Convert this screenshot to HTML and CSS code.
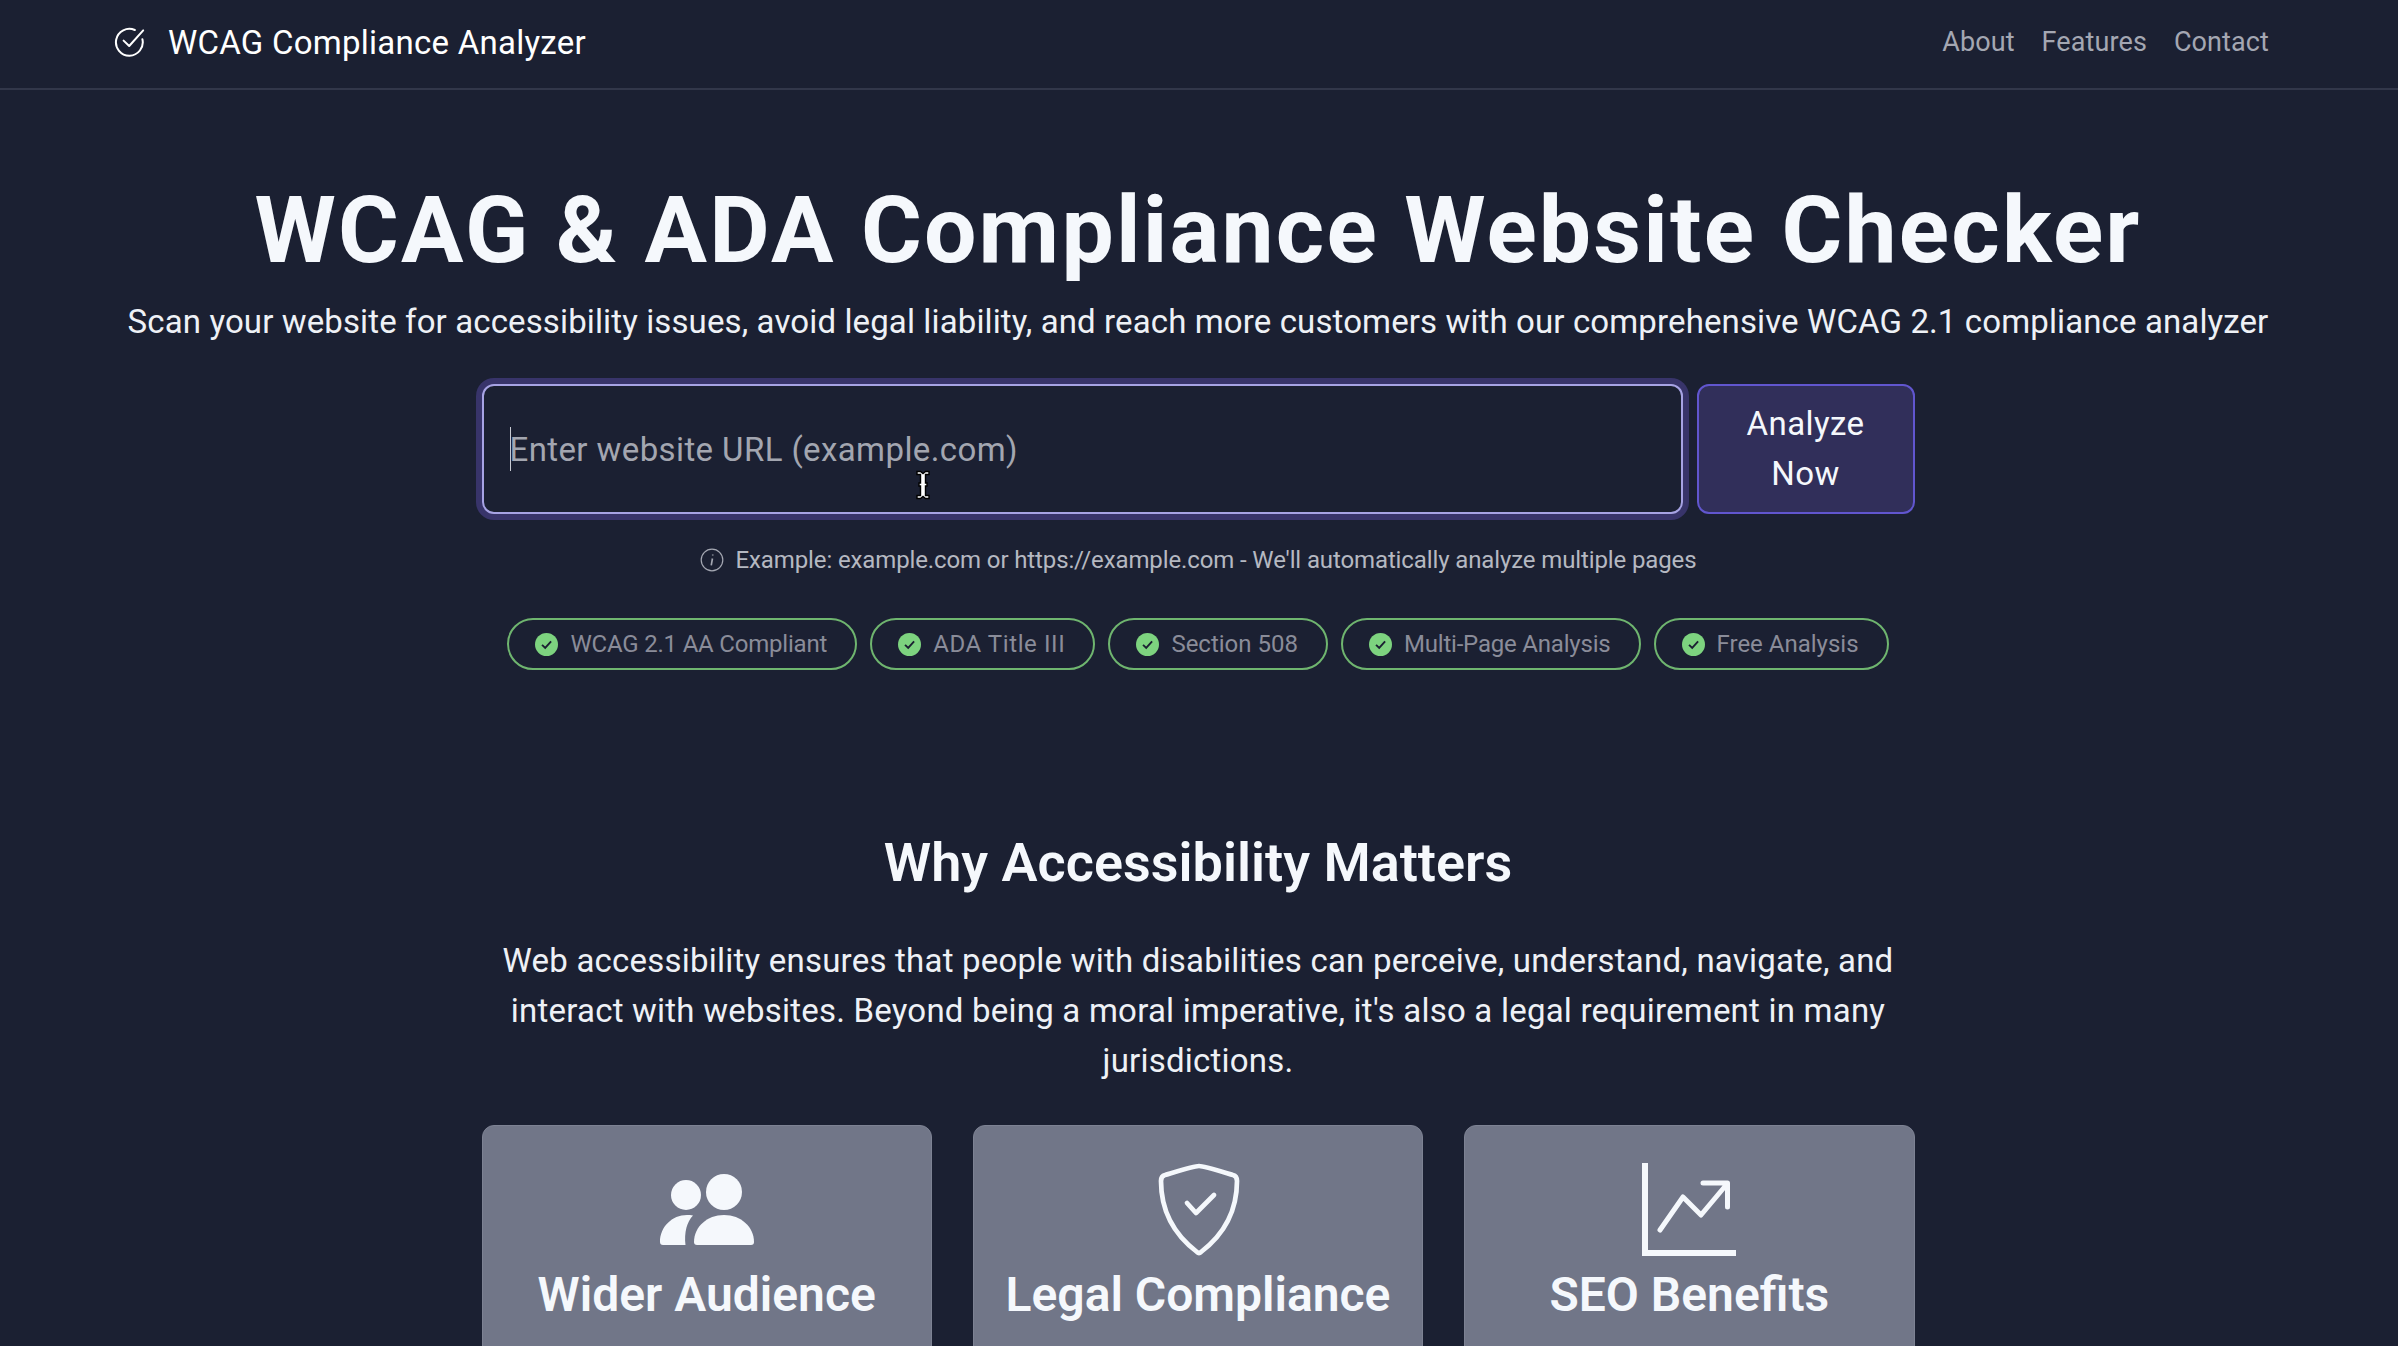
FILE: index.html
```html
<!DOCTYPE html>
<html lang="en">
<head>
<meta charset="utf-8">
<title>WCAG Compliance Analyzer</title>
<link rel="stylesheet" href="styles.css">
</head>
<body>
<header class="navbar">
  <a class="brand">
    <svg class="brand-icon" viewBox="0 0 16 16" fill="none" stroke="currentColor" stroke-width="1" stroke-linecap="round" stroke-linejoin="round"><path d="M14.2 6.6A6.7 6.7 0 1 1 10.4 2"/><path d="M4.8 7.3 7.6 10 14.6 2.2"/></svg>
    <span>WCAG Compliance Analyzer</span>
  </a>
  <nav class="nav-links"><a>About</a><a>Features</a><a>Contact</a></nav>
</header>
<main class="main">
  <h1 class="title">WCAG &amp; ADA Compliance Website Checker</h1>
  <p class="subtitle">Scan your website for accessibility issues, avoid legal liability, and reach more customers with our comprehensive WCAG 2.1 compliance analyzer</p>
  <div class="narrow">
    <form class="search">
      <div class="url-input">
        <span class="caret"></span><span class="placeholder">Enter website URL (example.com)</span>
        <svg class="ibeam" viewBox="0 0 16 30" fill="#fff" stroke="#000" stroke-width="1.4"><path d="M2 1.500h3.500L8 3.500l2.500-2H14v3h-3.500V13H12v3h-1.500v9.500H14v3h-3.500L8 26.500l-2.500 2H2v-3h3.500V16H4v-3h1.500V4.500H2z"/></svg>
      </div>
      <button class="analyze" type="button">Analyze Now</button>
    </form>
    <p class="hint">
      <svg class="hint-icon" viewBox="0 0 16 16" fill="none" stroke="currentColor"><circle cx="8" cy="8" r="7.2" stroke-width=".8"/><path d="M8.3 7 7.500 11.600M8.500 4.400v.6" stroke-width="1.100"/></svg>
      <span>Example: example.com or https://example.com - We'll automatically analyze multiple pages</span>
    </p>
    <ul class="badges">
      <li class="badge badge-tight"><svg class="badge-check" viewBox="0 0 16 16"><circle cx="8" cy="8" r="8" fill="#7dd37f"/><path d="M4.900 8.200 7.100 10.400 11.200 5.800" fill="none" stroke="#1b2032" stroke-width="1.300"/></svg><span>WCAG 2.1 AA Compliant</span></li>
      <li class="badge badge-loose"><svg class="badge-check" viewBox="0 0 16 16"><circle cx="8" cy="8" r="8" fill="#7dd37f"/><path d="M4.900 8.200 7.100 10.400 11.200 5.800" fill="none" stroke="#1b2032" stroke-width="1.300"/></svg><span>ADA Title III</span></li>
      <li class="badge"><svg class="badge-check" viewBox="0 0 16 16"><circle cx="8" cy="8" r="8" fill="#7dd37f"/><path d="M4.900 8.200 7.100 10.400 11.200 5.800" fill="none" stroke="#1b2032" stroke-width="1.300"/></svg><span>Section 508</span></li>
      <li class="badge badge-tight"><svg class="badge-check" viewBox="0 0 16 16"><circle cx="8" cy="8" r="8" fill="#7dd37f"/><path d="M4.900 8.200 7.100 10.400 11.200 5.800" fill="none" stroke="#1b2032" stroke-width="1.300"/></svg><span>Multi-Page Analysis</span></li>
      <li class="badge"><svg class="badge-check" viewBox="0 0 16 16"><circle cx="8" cy="8" r="8" fill="#7dd37f"/><path d="M4.900 8.200 7.100 10.400 11.200 5.800" fill="none" stroke="#1b2032" stroke-width="1.300"/></svg><span>Free Analysis</span></li>
    </ul>
    <section class="why">
      <h2 class="why-title">Why Accessibility Matters</h2>
      <p class="why-text">Web accessibility ensures that people with disabilities can perceive, understand, navigate, and interact with websites. Beyond being a moral imperative, it's also a legal requirement in many jurisdictions.</p>
      <div class="cards">
        <article class="card">
          <svg class="card-icon" viewBox="0 0 96 96" fill="#f5f8fc"><circle cx="27" cy="32" r="15"/><circle cx="65" cy="29" r="18"/><path d="M4 82c-2 0-3-1-3-3 0-15 12-27 27-27 2 0 4 0 6 .5-6 6-9 17-7.500 29.500z"/><path d="M38 82c-2 0-3-1-3-3 0-15 13-27 30-27s30 12 30 27c0 2-1 3-3 3z"/></svg>
          <h3 class="card-title">Wider Audience</h3>
        </article>
        <article class="card">
          <svg class="card-icon" viewBox="0 0 96 96" fill="none" stroke="#f5f8fc" stroke-width="4.700" stroke-linecap="round" stroke-linejoin="round"><path d="M49 3C54 3 76 10 83 12Q87 13 87 18C87 55 68 76 51 89Q49 91 47 89C30 76 11 55 11 18Q11 13 15 12C22 10 44 3 49 3Z"/><path d="M37 40 46 50 64 32"/></svg>
          <h3 class="card-title">Legal Compliance</h3>
        </article>
        <article class="card">
          <svg class="card-icon" viewBox="0 0 96 96" fill="none" stroke="#f5f8fc" stroke-width="6"><path d="M4 0V90H95"/><path d="M19 67 42 34 60 52 86 21M62 20H86.500V44" stroke-width="5" stroke-linecap="round" stroke-linejoin="round"/></svg>
          <h3 class="card-title">SEO Benefits</h3>
        </article>
      </div>
    </section>
  </div>
</main>
</body>
</html>
```
FILE: styles.css
```css
* { box-sizing: border-box; }
html, body { margin: 0; height: 100%; overflow: hidden; }
body {
  background: #1b2032;
  color: #f5f8fc;
  font-family: "Roboto", "Noto Sans", sans-serif;
}
.navbar {
  height: 90px;
  padding: 0 129px 4px 114px;
  display: flex;
  justify-content: space-between;
  align-items: center;
  border-bottom: 2px solid #32374a;
}
.brand { display: flex; align-items: center; gap: 22px; font-size: 33px; letter-spacing: 0.25px; color: #fff; }
.brand-icon { width: 32px; height: 32px; }
.nav-links { display: flex; gap: 27px; font-size: 27px; letter-spacing: 0.1px; color: #a4a7b2; }
.main { display: flex; flex-direction: column; align-items: center; padding: 81px 2px 0 0; }
.title { margin: 0; font-size: 93px; line-height: 120px; font-weight: 700; letter-spacing: 2.2px; color: #f5f8fc; white-space: nowrap; }
.subtitle { margin: 6px 0 0; font-size: 33px; line-height: 50px; letter-spacing: 0.12px; color: #eef1f6; white-space: nowrap; }
.narrow { width: 1433px; margin-top: 37px; display: flex; flex-direction: column; align-items: center; }
.search { width: 100%; display: flex; gap: 14px; }
.url-input {
  position: relative;
  flex: 1;
  height: 130px;
  padding: 0 24px 0 26px;
  display: flex;
  align-items: center;
  background: #1b2032;
  border: 2px solid #a7a3e4;
  border-radius: 12px;
  box-shadow: 0 0 0 6px #38346a;
  font-size: 33px;
  letter-spacing: 0.4px;
}
.caret { width: 1px; height: 44px; margin-right: -1px; background: #c7cad2; }
.placeholder { color: #a3a6b0; }
.ibeam { position: absolute; left: 431px; top: 84px; width: 16px; height: 30px; }
.analyze {
  width: 218px;
  height: 130px;
  padding: 0 30px;
  background: #312f5a;
  border: 2px solid #6156cf;
  border-radius: 12px;
  color: #f5f8fc;
  font: inherit;
  font-size: 33px;
  line-height: 50px;
  letter-spacing: 0.4px;
}
.hint {
  margin: 28px 0 0;
  display: flex;
  align-items: center;
  gap: 12px;
  font-size: 24px;
  line-height: 36px;
  letter-spacing: -0.12px;
  color: #b5b8c1;
}
.hint-icon { width: 24px; height: 24px; color: #a4a7b2; }
.badges { list-style: none; margin: 40px 0 0; padding: 0; display: flex; gap: 13px; }
.badge {
  height: 52px;
  padding: 0 28px 0 26px;
  display: flex;
  align-items: center;
  gap: 12px;
  border: 2px solid #6fb56f;
  border-radius: 26px;
  color: #8a8c99;
  font-size: 24px;
}
.badge-tight { letter-spacing: -0.2px; }
.badge-loose { letter-spacing: 0.6px; }
.badge-check { width: 23px; height: 23px; }
.why { width: 100%; display: flex; flex-direction: column; align-items: center; }
.why-title { margin: 160px 0 0; font-size: 54px; line-height: 66px; font-weight: 600; text-align: center; }
.why-text { margin: 40px 0 0; font-size: 33px; line-height: 50px; letter-spacing: 0.22px; text-align: center; color: #eef1f6; }
.cards { width: 100%; margin-top: 39px; display: grid; grid-template-columns: repeat(3, 1fr); gap: 41px; }
.card {
  height: 400px;
  padding: 37px 20px;
  display: flex;
  flex-direction: column;
  align-items: center;
  background: #717688;
  border: 1px solid #7d8293;
  border-radius: 12px;
}
.card-icon { width: 96px; height: 96px; }
.card-title { margin: 6px 0 0; font-size: 48px; line-height: 60px; font-weight: 600; color: #f5f8fc; }
```
